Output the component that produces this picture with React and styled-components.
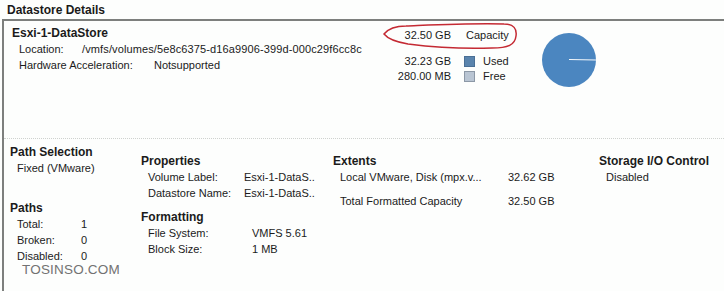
import React from "react";
import styled, { createGlobalStyle } from "styled-components";

const GlobalStyle = createGlobalStyle`
  html, body {
    margin: 0;
    padding: 0;
    background: #fdfefd;
  }
  body {
    font-family: "Liberation Sans", Arial, sans-serif;
    font-size: 11px;
    color: #1b1b1b;
  }
`;

const Page = styled.div`
  width: 724px;
  height: 291px;
  overflow: hidden;
`;

const Title = styled.div`
  height: 19px;
  line-height: 20px;
  padding-left: 7px;
  font-weight: bold;
  font-size: 12px;
  color: #1a1a1a;
`;

const Frame = styled.div`
  margin-left: 2px;
  border-top: 2px solid #7d7f7d;
  border-left: 2px solid #7d7f7d;
  height: 272px;
`;

const TopArea = styled.div`
  display: flex;
  height: 117px;
  padding-left: 8px;
`;

const Info = styled.div`
  flex: 0 0 370px;
  padding-top: 4px;
  line-height: 16px;
  white-space: nowrap;
  overflow: hidden;
`;

const Name = styled.div`
  font-weight: bold;
  font-size: 12px;
`;

const InfoRow = styled.div`
  display: flex;
  padding-left: 7px;
`;

const InfoLabel = styled.span`
  flex: 0 0 ${(p) => p.$w}px;
`;

const Path = styled.span`
  letter-spacing: 0.12px;
`;

const Capacity = styled.div`
  position: relative;
  flex: 0 0 140px;
  padding-top: 6px;
`;

const CapRow = styled.div`
  display: flex;
  align-items: center;
  line-height: ${(p) => (p.$main ? 16 : 15)}px;
  margin-top: ${(p) => p.$top || 0}px;
`;

const CapValue = styled.span`
  width: 69px;
  text-align: right;
`;

const CapLabel = styled.span`
  margin-left: ${(p) => p.$gap}px;
`;

const Swatch = styled.span`
  width: 9px;
  height: 9px;
  margin-left: 13px;
  background: ${(p) => p.$color};
  border: 1px solid ${(p) => p.$border};
`;

const Ellipse = styled.svg`
  position: absolute;
  left: 0;
  top: 2px;
  pointer-events: none;
`;

const Pie = styled.svg`
  margin-left: 19px;
  margin-top: 11px;
`;

const Separator = styled.div`
  border-top: 1px dotted #cfd2cf;
`;

const Bottom = styled.div`
  display: grid;
  grid-template-columns: 131px 192px 266px 1fr;
  padding-left: 6px;
  line-height: 16px;
  white-space: nowrap;
`;

const Column = styled.div`
  padding-top: ${(p) => p.$top}px;
`;

const Heading = styled.div`
  font-weight: bold;
  font-size: 12px;
  margin-top: ${(p) => p.$top || 0}px;
`;

const Row = styled.div`
  display: flex;
  padding-left: 7px;
  margin-top: ${(p) => p.$top || 0}px;
`;

const Label = styled.span`
  flex: 0 0 ${(p) => p.$w}px;
`;

const Watermark = styled.div`
  padding-left: 12px;
  margin-top: -2px;
  font-size: 13.5px;
  line-height: 16px;
  letter-spacing: 0.2px;
  color: #727272;
`;

export default function App() {
  return (
    <Page>
      <GlobalStyle />
      <Title>Datastore Details</Title>
      <Frame>
        <TopArea>
          <Info>
            <Name>Esxi-1-DataStore</Name>
            <InfoRow>
              <InfoLabel $w={63}>Location:</InfoLabel>
              <Path>/vmfs/volumes/5e8c6375-d16a9906-399d-000c29f6cc8c</Path>
            </InfoRow>
            <InfoRow>
              <InfoLabel $w={135}>Hardware Acceleration:</InfoLabel>
              <span>Notsupported</span>
            </InfoRow>
          </Info>
          <Capacity>
            <CapRow $main>
              <CapValue>32.50 GB</CapValue>
              <CapLabel $gap={15}>Capacity</CapLabel>
            </CapRow>
            <CapRow $top={11}>
              <CapValue>32.23 GB</CapValue>
              <Swatch $color="#5a84ad" $border="#4a6f95" />
              <CapLabel $gap={8}>Used</CapLabel>
            </CapRow>
            <CapRow>
              <CapValue>280.00 MB</CapValue>
              <Swatch $color="#b9c5d3" $border="#8c98a6" />
              <CapLabel $gap={8}>Free</CapLabel>
            </CapRow>
            <Ellipse width="140" height="28" viewBox="0 0 140 28">
              <path
                d="M2 11 C6 6 12 3 24 3 C50 2 90 0 122 1 C132 1 135 6 134 13 C133 22 126 25 110 25 C84 26 50 24 26 21 C14 19 6 16 2 11 Z"
                fill="none"
                stroke="#c42a33"
                strokeWidth="1.5"
              />
            </Ellipse>
          </Capacity>
          <Pie width="56" height="56" viewBox="0 0 56 56">
            <circle cx="28" cy="28" r="27" fill="#4b86c0" />
            <line x1="28" y1="27.5" x2="55" y2="28" stroke="#f4f8fb" strokeWidth="1.2" />
          </Pie>
        </TopArea>
        <Separator />
        <Bottom>
          <Column $top={5}>
            <Heading>Path Selection</Heading>
            <Row>Fixed (VMware)</Row>
            <Heading $top={24}>Paths</Heading>
            <Row>
              <Label $w={64}>Total:</Label>
              <span>1</span>
            </Row>
            <Row>
              <Label $w={64}>Broken:</Label>
              <span>0</span>
            </Row>
            <Row>
              <Label $w={64}>Disabled:</Label>
              <span>0</span>
            </Row>
            <Watermark>TOSINSO.COM</Watermark>
          </Column>
          <Column $top={14}>
            <Heading>Properties</Heading>
            <Row>
              <Label $w={96}>Volume Label:</Label>
              <span>Esxi-1-DataS..</span>
            </Row>
            <Row>
              <Label $w={96}>Datastore Name:</Label>
              <span>Esxi-1-DataS..</span>
            </Row>
            <Heading $top={8}>Formatting</Heading>
            <Row>
              <Label $w={104}>File System:</Label>
              <span>VMFS 5.61</span>
            </Row>
            <Row>
              <Label $w={104}>Block Size:</Label>
              <span>1 MB</span>
            </Row>
          </Column>
          <Column $top={14}>
            <Heading>Extents</Heading>
            <Row>
              <Label $w={168}>Local VMware, Disk (mpx.v...</Label>
              <span>32.62 GB</span>
            </Row>
            <Row $top={8}>
              <Label $w={168}>Total Formatted Capacity</Label>
              <span>32.50 GB</span>
            </Row>
          </Column>
          <Column $top={14}>
            <Heading>Storage I/O Control</Heading>
            <Row>Disabled</Row>
          </Column>
        </Bottom>
      </Frame>
    </Page>
  );
}
